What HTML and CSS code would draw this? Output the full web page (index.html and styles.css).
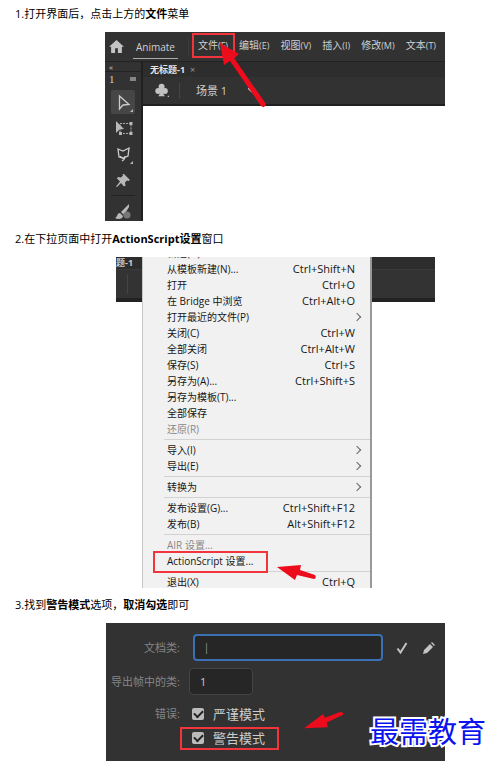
FILE: index.html
```html
<!DOCTYPE html>
<html lang="zh-CN">
<head>
<meta charset="utf-8">
<meta name="viewport" content="width=device-width, initial-scale=1">
<title>Animate ActionScript 设置</title>
<link rel="stylesheet" href="styles.css">
</head>
<body>
<main class="article">
  <p class="step">1.打开界面后，点击上方的<strong>文件</strong>菜单</p>
  <figure class="shot app">
    <header class="app-bar">
      <svg class="home" viewBox="0 0 16 14" aria-hidden="true"><path d="M8 0 0 7.4h2.2V14h4.3V9h3v5h4.3V7.4H16Z"/></svg>
      <span class="app-name">Animate</span>
      <nav class="app-menu">
        <button type="button">文件<small>(F)</small></button>
        <button type="button">编辑<small>(E)</small></button>
        <button type="button">视图<small>(V)</small></button>
        <button type="button">插入<small>(I)</small></button>
        <button type="button">修改<small>(M)</small></button>
        <button type="button">文本<small>(T)</small></button>
      </nav>
    </header>
    <div class="workspace">
      <aside class="tools">
        <div class="tools-head"><span class="collapse">«</span><span class="tools-row"><span class="tools-num">1</span><span class="grip"></span></span></div>
        <button type="button" class="tool selected" aria-label="选择"><svg viewBox="0 0 24 24"><path class="line" d="M8.500 6v13l3.500-4 6-.5Z"/><path d="M22 19v3h-3Z"/></svg></button>
        <button type="button" class="tool" aria-label="变形"><svg viewBox="0 0 24 24"><path class="dash" d="M9 7.500h11v10H9Z"/><path d="M5 5v12l3.500-3.500 4.500-.5ZM18.500 6h3v3h-3ZM18.500 16h3v3h-3ZM8 16h3v3H8Z"/></svg></button>
        <button type="button" class="tool" aria-label="套索"><svg viewBox="0 0 24 24"><path class="line" d="m7 7 5 2 6-3-1 8-5 2-4-1Zm3 7c-1 3 4 3 4 0 0 3-1 4-3 5"/><path d="M22 19v3h-3Z"/></svg></button>
        <button type="button" class="tool" aria-label="固定"><svg viewBox="0 0 24 24"><path d="m13 6 6 6-1.500 1-1.500-.5-2 2 .5 3-1.500 1-3-3.500L6 19l-1-.5 4-5-3-3 1-1.500 3 .5 2-2-.5-1.500Z"/></svg></button>
        <hr class="tool-rule">
        <button type="button" class="tool" aria-label="画笔"><svg viewBox="0 0 24 24"><path d="m18 4-8 8 3 3 5-8ZM9 13c-3 0-2 3-5 5 3 2 8 1 8-2Z"/><circle class="dim" cx="16" cy="15" r="3.500"/></svg></button>
      </aside>
      <section class="document">
        <div class="tabs"><b>无标题-1</b><span class="close">×</span></div>
        <div class="scene">
          <svg class="club" viewBox="0 0 16 16" aria-hidden="true"><circle cx="7" cy="4" r="3.200"/><circle cx="3.500" cy="8.500" r="3.200"/><circle cx="10.500" cy="8.500" r="3.200"/><path d="M6 6h2l.5 5 2 3h-7l2-3ZM15 13v2h-2Z"/></svg>
          <span class="scene-name">场景 1</span>
          <svg class="caret" viewBox="0 0 8 6" aria-hidden="true"><path d="m1 1 3 3 3-3"/></svg>
        </div>
        <div class="stage"></div>
      </section>
    </div>
    <span class="mark mark-file"></span>
    <svg class="arrow arrow-file" viewBox="0 0 52 70" aria-hidden="true"><path d="m4 4 19 11-5 4 32 46q-1 5-5 2L14 22l-6 4Z"/></svg>
  </figure>

  <p class="step">2.在下拉页面中打开<strong>ActionScript设置</strong>窗口</p>
  <figure class="shot dropdown">
    <div class="backdrop"><div class="back-tab"><b>题-1</b></div><div class="back-scene"></div></div>
    <div class="file-menu">
      <button type="button">新建(N)...</button>
      <button type="button">从模板新建(N)...<kbd>Ctrl+Shift+N</kbd></button>
      <button type="button">打开<kbd>Ctrl+O</kbd></button>
      <button type="button">在 Bridge 中浏览<kbd>Ctrl+Alt+O</kbd></button>
      <button type="button" class="sub">打开最近的文件(P)</button>
      <button type="button">关闭(C)<kbd>Ctrl+W</kbd></button>
      <button type="button">全部关闭<kbd>Ctrl+Alt+W</kbd></button>
      <button type="button">保存(S)<kbd>Ctrl+S</kbd></button>
      <button type="button">另存为(A)...<kbd>Ctrl+Shift+S</kbd></button>
      <button type="button">另存为模板(T)...</button>
      <button type="button">全部保存</button>
      <button type="button" disabled>还原(R)</button>
      <hr>
      <button type="button" class="sub">导入(I)</button>
      <button type="button" class="sub">导出(E)</button>
      <hr>
      <button type="button" class="sub">转换为</button>
      <hr>
      <button type="button">发布设置(G)...<kbd>Ctrl+Shift+F12</kbd></button>
      <button type="button">发布(B)<kbd>Alt+Shift+F12</kbd></button>
      <hr>
      <button type="button" disabled>AIR 设置...</button>
      <button type="button">ActionScript 设置...</button>
      <hr>
      <button type="button">退出(X)<kbd>Ctrl+Q</kbd></button>
    </div>
    <span class="mark mark-script"></span>
    <svg class="arrow arrow-script" viewBox="0 0 40 16" aria-hidden="true"><path d="M0 2 24 0l-1 5 15 5q2 3-1 4l-17-4-2 5Z"/></svg>
  </figure>

  <p class="step">3.找到<strong>警告模式</strong>选项，<strong>取消勾选</strong>即可</p>
  <figure class="shot settings">
    <div class="field">
      <label for="doc-class">文档类:</label>
      <input id="doc-class" class="doc-class" type="text" value="│">
      <svg class="icon" viewBox="0 0 12 12" aria-hidden="true"><path class="check" d="m1.500 6.500 3 4L10.500 1"/></svg>
      <svg class="icon" viewBox="0 0 12 12" aria-hidden="true"><path d="m8 1 1-1 3 3-1 1ZM7 2l3 3-6 6-4 1 1-4Z"/></svg>
    </div>
    <div class="field">
      <label for="frame">导出帧中的类:</label>
      <input id="frame" class="frame" type="text" value="1">
    </div>
    <div class="field option">
      <span class="caption">错误:</span>
      <input id="strict" type="checkbox" checked><label for="strict">严谨模式</label>
    </div>
    <div class="field option">
      <span class="caption"></span>
      <input id="warn" type="checkbox" checked><label for="warn">警告模式</label>
    </div>
    <span class="mark mark-warn"></span>
    <svg class="arrow arrow-warn" viewBox="0 0 42 20" aria-hidden="true"><path d="M0 17 20 2l2 4 16-6q4 0 3 3L24 11l1 5Z"/></svg>
    <span class="watermark">最需教育</span>
  </figure>
</main>
</body>
</html>
```

FILE: styles.css
```css
* { box-sizing: border-box; }

body {
  margin: 0;
  background: #fff;
  color: #000;
  font: 11px/16px "Open Sans", "Noto Sans CJK SC", sans-serif;
}

button, input { margin: 0; font: inherit; color: inherit; }
button { padding: 0; border: 0; background: none; text-align: left; white-space: nowrap; }
svg { display: block; flex: none; }

.article { padding: 6px 0 0 15px; overflow: hidden; }
.step { margin: 0 0 10px; }
.shot + .step { margin-top: 10px; }

.shot {
  position: relative;
  width: 100%;
  max-width: 340px;
  margin: 0 0 0 90px;
}

/* annotations */
.mark { position: absolute; border: 2px solid #f2353c; }
.arrow { position: absolute; fill: #ec0c1c; }

/* application window */
.app { background: #323232; color: #d0d0d0; font-size: 10px; }
.app-bar { display: flex; align-items: center; height: 29px; padding: 0 9px 0 4px; }
.home { width: 15px; height: 13px; fill: #c4c4c4; }
.app-name {
  height: 22px;
  margin: 3px 10px 0 9px;
  padding: 0 3px;
  border-bottom: 1px solid #aaa;
  font-size: 10px;
  line-height: 21px;
}
.app-menu {
  display: flex;
  flex: 1;
  justify-content: space-between;
  align-items: flex-start;
  height: 20px;
  padding-left: 9px;
  border-left: 1px solid #3c3c3c;
}
.app-menu small { font-size: 9px; }
.workspace { display: flex; height: 160px; border-top: 1px solid #222; }
.tools {
  display: flex;
  flex-direction: column;
  align-items: center;
  flex: none;
  width: 38px;
  border-right: 2px solid #202020;
  overflow: hidden;
}
.tools-head { align-self: stretch; flex: none; height: 28px; line-height: 9px; }
.collapse { display: block; height: 10px; padding-left: 4px; border-bottom: 1px solid #222; font-size: 8px; }
.tools-row { display: flex; align-items: center; justify-content: space-between; height: 14px; padding: 0 5px 0 4px; }
.tools-num { font: 11px/14px "Liberation Serif", serif; }
.grip { width: 6px; height: 4px; background: #858585; }
.tool { flex: none; width: 24px; height: 24px; margin-bottom: 2px; border-radius: 2px; }
.tool.selected { background: #464646; }
.tool svg { width: 24px; height: 24px; fill: #b8b8b8; }
.tool .line { fill: none; stroke: #ccc; stroke-width: 1.3; }
.tool .dash { fill: none; stroke: #aaa; stroke-dasharray: 2 1; }
.tool .dim { fill: #777; }
.tool-rule { flex: none; width: 24px; margin: 1px 0 4px; border: 0; border-top: 1px solid #222; }
.document { display: flex; flex: 1; flex-direction: column; min-width: 0; }
.tabs { display: flex; gap: 5px; height: 15px; padding-left: 7px; background: #2d2d2d; font-size: 9px; line-height: 15px; }
.tabs b { color: #e5e5e5; }
.close { color: #999; }
.scene { display: flex; align-items: center; height: 29px; padding-left: 12px; border-bottom: 2px solid #202020; }
.club { width: 15px; height: 15px; fill: #c2c2c2; }
.scene-name { margin: 0 20px 0 9px; padding-left: 16px; border-left: 1px solid #444; font-size: 11px; }
.caret { width: 9px; height: 7px; fill: none; stroke: #ccc; }
.stage { flex: 1; background: #fff; }
.mark-file { top: 1px; left: 87px; width: 43px; height: 25px; }
.arrow-file { top: 7px; left: 111px; width: 52px; height: 70px; }

/* file menu */
.dropdown { max-width: 319px; height: 331px; margin-left: 101px; overflow: hidden; color: #161616; font-size: 10px; }
.dropdown + .step { margin-top: 9px; }
.backdrop { position: absolute; inset: 0 0 auto; height: 45px; border-bottom: 4px solid #222; background: #333; color: #ccc; }
.back-tab { height: 13px; background: #2d2d2d; font-size: 9px; line-height: 12px; border-bottom: 1px solid #3a3a3a; }
.back-scene { width: 12px; height: 20px; margin-top: 4px; border-right: 1px solid #444; }
.file-menu {
  position: relative;
  display: flex;
  flex-direction: column;
  width: 230px;
  height: 100%;
  margin-left: 26px;
  padding-left: 21px;
  border-left: 1px solid #c8c8c8;
  border-right: 2px solid #999;
  background: #f1f1f1;
  overflow: hidden;
}
.file-menu button { display: flex; flex: none; justify-content: space-between; height: 16px; padding: 0 15px 0 3px; line-height: 16px; }
.file-menu button:first-child { margin-top: -12px; }
.file-menu button:disabled { color: #888; }
.file-menu kbd { font: inherit; font-size: 11px; }
.file-menu hr { flex: none; align-self: stretch; margin: 2px 0; border: 0; border-top: 1px solid #d2d2d2; }
.file-menu .sub { align-items: center; padding-right: 10px; }
.sub::after { content: ""; width: 5px; height: 5px; border: solid #666; border-width: 1px 1px 0 0; transform: rotate(45deg); }
.mark-script { top: 294px; left: 37px; width: 115px; height: 22px; }
.arrow-script { top: 308px; left: 161px; width: 40px; height: 16px; }

/* settings panel */
.settings { max-width: 339px; height: 138px; margin-left: 91px; padding-top: 11px; background: #323232; color: #ccc; }
.field { display: flex; align-items: center; height: 27px; margin-bottom: 7px; }
.field > label:first-child, .caption { flex: none; width: 74px; color: #858585; text-align: right; white-space: nowrap; }
.field input[type="text"] { height: 27px; border: 1px solid #444; border-radius: 4px; background: #262626; }
.field input.doc-class { flex: 1; min-width: 0; margin-left: 13px; padding: 0 6px; border: 2px solid #3b70b5; }
.field input.frame { width: 64px; margin-left: 9px; padding: 0 10px; }
.icon { width: 12px; height: 12px; margin-left: 15px; fill: #c4c4c4; }
.doc-class + .icon { margin-left: 13px; }
.icon:last-child { margin-right: 10px; }
.check { fill: none; stroke: #c4c4c4; stroke-width: 2; }
.field.option { height: 24px; margin: 0; font-size: 13px; }
.caption { font-size: 11px; }
.option input {
  display: grid;
  place-items: center;
  width: 12px;
  height: 12px;
  margin: 0 9px 0 12px;
  appearance: none;
  border-radius: 2px;
  background: #bbb;
}
.option input:checked::before {
  content: "";
  width: 7px;
  height: 4px;
  margin-bottom: 2px;
  border: solid #222;
  border-width: 0 0 2px 2px;
  transform: rotate(-45deg);
}
.mark-warn { top: 104px; left: 74px; width: 99px; height: 23px; }
.arrow-warn { top: 89px; left: 198px; width: 40px; height: 19px; }
.watermark {
  position: absolute;
  top: 90px;
  left: 264px;
  color: #0a12ee;
  font: 29px/34px "Noto Sans CJK SC", sans-serif;
  white-space: nowrap;
  -webkit-text-stroke: 4px #fff;
  paint-order: stroke fill;
}
```
